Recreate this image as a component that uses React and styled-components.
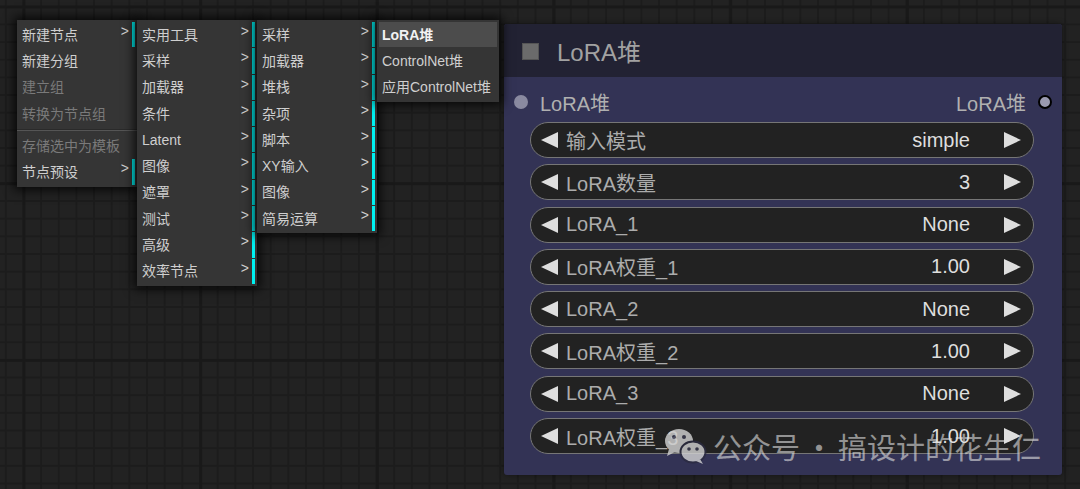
import React from "react";
import styled, { createGlobalStyle } from "styled-components";

const GlobalStyle = createGlobalStyle`
  html, body {
    margin: 0;
    padding: 0;
    background: #222;
  }
  body {
    font-family: "Liberation Sans", "Noto Sans CJK SC", sans-serif;
  }
`;

const Canvas = styled.div`
  position: relative;
  width: 1080px;
  height: 489px;
  overflow: hidden;
  background-color: #222;
  background-image:
    linear-gradient(to right, #191919 3px, transparent 3px),
    linear-gradient(to bottom, #191919 3px, transparent 3px),
    linear-gradient(to right, #1c1c1c 2px, transparent 2px),
    linear-gradient(to bottom, #1c1c1c 2px, transparent 2px);
  background-size: 176.7px 176.7px, 176.7px 176.7px, 17.67px 17.67px, 17.67px 17.67px;
  background-position: 22.5px 5.5px, 22.5px 5.5px, 4.8px 5.8px, 4.8px 5.8px;
`;

/* ---------- context menus ---------- */

const MenuStack = styled.div`
  position: absolute;
  left: 17px;
  top: 20px;
  display: flex;
  align-items: flex-start;
  z-index: 3;
`;

const Menu = styled.div`
  position: relative;
  width: ${(p) => p.$w}px;
  padding: 1px 0;
  background: #353535;
  box-shadow: 0 0 10px 3px rgba(0, 0, 0, 0.8);
  font-family: "Liberation Sans", "Noto Sans CJK SC", sans-serif;
  font-size: 14px;
`;

const Item = styled.div`
  position: relative;
  display: flex;
  align-items: center;
  height: 25.3px;
  margin: 1px 2px;
  padding: 0 3px;
  line-height: 16px;
  white-space: nowrap;
  color: ${(p) => (p.$disabled ? "#7a7a7a" : p.$active ? "#f2f2f2" : "#cfcfcf")};
  font-weight: ${(p) => (p.$active ? 700 : 400)};
  background: ${(p) => (p.$active ? "#4c4c4c" : "transparent")};
  border-right: ${(p) => (p.$sub ? "3px solid #00f0f0" : "0")};
`;

const Chevron = styled.span`
  position: absolute;
  right: 3px;
  top: 1px;
  color: #cfcfcf;
  font-size: 14px;
`;

const Separator = styled.div`
  height: 0;
  margin: 3px 0 2px;
  border-top: 1px solid #2a2a2a;
  border-bottom: 1px solid #555;
`;

const MenuEntry = ({ label, sub, disabled, active }) => (
  <Item $sub={sub} $disabled={disabled} $active={active}>
    {label}
    {sub && <Chevron>&gt;</Chevron>}
  </Item>
);

/* ---------- node ---------- */

const Node = styled.div`
  position: absolute;
  left: 504px;
  top: 24px;
  width: 558px;
  height: 451px;
  display: flex;
  flex-direction: column;
  background: #333355;
  border-radius: 3px;
  overflow: hidden;
  box-shadow: 0 0 6px rgba(0, 0, 0, 0.45);
  font-family: "Liberation Sans", "Noto Sans CJK SC", sans-serif;
  z-index: 1;
`;

const Header = styled.div`
  height: 53px;
  flex: none;
  display: flex;
  align-items: center;
  gap: 18px;
  padding-left: 18px;
  background: #222233;
`;

const Box = styled.div`
  width: 17px;
  height: 17px;
  margin-top: 2px;
  box-sizing: border-box;
  background: #6b6b6b;
  border: 1px solid #555;
`;

const Title = styled.div`
  font-size: 24px;
  color: #a2a2a2;
`;

const SlotRow = styled.div`
  height: 40px;
  margin-top: 5px;
  display: flex;
  align-items: center;
  justify-content: space-between;
  padding: 0 10px;
`;

const Slot = styled.div`
  display: flex;
  align-items: center;
  gap: 12px;
  font-size: 20px;
  color: #b0b0b0;
`;

const Dot = styled.span`
  width: 14px;
  height: 14px;
  box-sizing: border-box;
  border-radius: 50%;
  background: ${(p) => (p.$out ? "#9a9ab0" : "#8a8aa0")};
  border: ${(p) => (p.$out ? "2px solid #000" : "0")};
`;

const WidgetList = styled.div`
  display: flex;
  flex-direction: column;
  gap: 6.3px;
  padding: 0 28px 0 26px;
`;

const Widget = styled.div`
  height: 36px;
  box-sizing: border-box;
  display: flex;
  align-items: center;
  padding: 0 12px 0 10px;
  background: #222;
  border: 1px solid #767676;
  border-radius: 18px;
  font-size: 20px;
`;

const Label = styled.span`
  flex: 1;
  margin-left: 8px;
  color: #acacac;
  white-space: nowrap;
`;

const Value = styled.span`
  margin-right: 34px;
  color: #dedede;
`;

const Arrow = ({ dir }) => (
  <svg width="17" height="16" viewBox="0 0 17 16">
    {dir === "left" ? (
      <polygon points="17,0 0,8 17,16" fill="#dedede" />
    ) : (
      <polygon points="0,0 17,8 0,16" fill="#dedede" />
    )}
  </svg>
);

/* ---------- watermark ---------- */

const Watermark = styled.div`
  position: absolute;
  left: 663px;
  top: 425px;
  display: flex;
  align-items: center;
  gap: 6px;
  font-family: "Noto Sans CJK SC", sans-serif;
  font-size: 29px;
  word-spacing: -2px;
  color: rgba(225, 225, 225, 0.6);
  z-index: 4;
  pointer-events: none;
`;

const WeChatIcon = () => (
  <svg width="44" height="40" viewBox="0 0 44 40">
    <g opacity="0.8">
      <ellipse cx="16" cy="15" rx="14" ry="12" fill="#d4d4d4" />
      <polygon points="6,23 4,30 12,26" fill="#d4d4d4" />
      <circle cx="11" cy="11" r="2" fill="#3a3a50" />
      <circle cx="21" cy="11" r="2" fill="#3a3a50" />
      <ellipse cx="30" cy="26" rx="12.5" ry="10.5" fill="#d4d4d4" stroke="#2b2b40" strokeWidth="2" />
      <polygon points="37,33 40,38 33,35" fill="#d4d4d4" />
      <circle cx="26" cy="23" r="1.8" fill="#3a3a50" />
      <circle cx="34" cy="23" r="1.8" fill="#3a3a50" />
    </g>
  </svg>
);

const menus = [
  {
    w: 120,
    items: [
      { label: "新建节点", sub: true },
      { label: "新建分组" },
      { label: "建立组", disabled: true },
      { label: "转换为节点组", disabled: true },
      { sep: true },
      { label: "存储选中为模板", disabled: true },
      { label: "节点预设", sub: true },
    ],
  },
  {
    w: 120,
    items: ["实用工具", "采样", "加载器", "条件", "Latent", "图像", "遮罩", "测试", "高级", "效率节点"].map(
      (label) => ({ label, sub: true })
    ),
  },
  {
    w: 120,
    items: ["采样", "加载器", "堆栈", "杂项", "脚本", "XY输入", "图像", "简易运算"].map((label) => ({
      label,
      sub: true,
    })),
  },
  {
    w: 122,
    items: [{ label: "LoRA堆", active: true }, { label: "ControlNet堆" }, { label: "应用ControlNet堆" }],
  },
];

const widgets = [
  ["输入模式", "simple"],
  ["LoRA数量", "3"],
  ["LoRA_1", "None"],
  ["LoRA权重_1", "1.00"],
  ["LoRA_2", "None"],
  ["LoRA权重_2", "1.00"],
  ["LoRA_3", "None"],
  ["LoRA权重_3", "1.00"],
];

export default function App() {
  return (
    <>
      <GlobalStyle />
      <Canvas>
        <MenuStack>
          {menus.map((m, i) => (
            <Menu key={i} $w={m.w}>
              {m.items.map((it, j) =>
                it.sep ? <Separator key={j} /> : <MenuEntry key={j} {...it} />
              )}
            </Menu>
          ))}
        </MenuStack>

        <Node>
          <Header>
            <Box />
            <Title>LoRA堆</Title>
          </Header>
          <SlotRow>
            <Slot>
              <Dot />
              LoRA堆
            </Slot>
            <Slot>
              LoRA堆
              <Dot $out />
            </Slot>
          </SlotRow>
          <WidgetList>
            {widgets.map(([label, value]) => (
              <Widget key={label}>
                <Arrow dir="left" />
                <Label>{label}</Label>
                <Value>{value}</Value>
                <Arrow dir="right" />
              </Widget>
            ))}
          </WidgetList>
        </Node>

        <Watermark>
          <WeChatIcon />
          <span>公众号 · 搞设计的花生仁</span>
        </Watermark>
      </Canvas>
    </>
  );
}
